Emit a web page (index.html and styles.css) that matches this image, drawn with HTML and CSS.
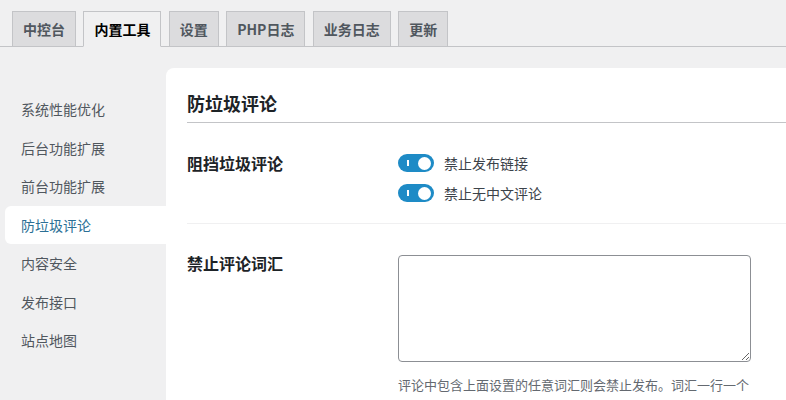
FILE: index.html
```html
<!DOCTYPE html>
<html lang="zh-CN">
<head>
<meta charset="utf-8">
<title>内置工具</title>
<link rel="stylesheet" href="styles.css">
</head>
<body>
<nav class="tabs">
  <a class="tab">中控台</a>
  <a class="tab active">内置工具</a>
  <a class="tab">设置</a>
  <a class="tab">PHP日志</a>
  <a class="tab">业务日志</a>
  <a class="tab">更新</a>
</nav>
<div class="layout">
  <ul class="side">
    <li class="side-item">系统性能优化</li>
    <li class="side-item">后台功能扩展</li>
    <li class="side-item">前台功能扩展</li>
    <li class="side-item current">防垃圾评论</li>
    <li class="side-item">内容安全</li>
    <li class="side-item">发布接口</li>
    <li class="side-item">站点地图</li>
  </ul>
  <main class="panel">
    <h2 class="panel-title">防垃圾评论</h2>
    <div class="row">
      <div class="row-label">阻挡垃圾评论</div>
      <div class="row-field">
        <label class="option"><span class="switch"></span>禁止发布链接</label>
        <label class="option"><span class="switch"></span>禁止无中文评论</label>
      </div>
    </div>
    <div class="row row-last">
      <div class="row-label">禁止评论词汇</div>
      <div class="row-field">
        <textarea class="words"></textarea>
        <p class="desc">评论中包含上面设置的任意词汇则会禁止发布。词汇一行一个</p>
      </div>
    </div>
  </main>
</div>
</body>
</html>
```

FILE: styles.css
```css
html, body {
  margin: 0;
  padding: 0;
  height: 100%;
}
body {
  background: #f0f0f1;
  font-family: "Noto Sans CJK SC", "Noto Sans", sans-serif;
  color: #1d2327;
  overflow: hidden;
}
.tabs {
  display: flex;
  gap: 7.4px;
  padding: 11px 0 0 12px;
  border-bottom: 1px solid #c3c4c7;
}
.tab {
  display: block;
  margin-bottom: -1px;
  padding: 5px 10px;
  font-size: 14px;
  line-height: 24px;
  font-weight: 700;
  color: #50575e;
  background: #dcdcde;
  border: 1px solid #c3c4c7;
}
.tab.active {
  background: #f0f0f1;
  color: #000;
  border-bottom-color: #f0f0f1;
}
.layout {
  display: flex;
  margin-top: 21px;
  height: calc(100% - 68px);
}
.side {
  list-style: none;
  margin: 0;
  padding: 22px 0 0;
  width: 166px;
  flex: none;
}
.side-item {
  height: 38.5px;
  line-height: 38.5px;
  padding-left: 21px;
  font-size: 14px;
  color: #50575e;
}
.side-item.current {
  margin-left: 5px;
  padding-left: 16px;
  background: #fff;
  color: #2b6f95;
  border-radius: 6px 0 0 6px;
}
.panel {
  flex: 1;
  background: #fff;
  border-top-left-radius: 8px;
  padding-left: 21px;
}
.panel-title {
  margin: 0;
  padding: 22px 0 6px;
  font-size: 18px;
  line-height: 26px;
  font-weight: 700;
  border-bottom: 1px solid #c3c4c7;
}
.row {
  display: flex;
  padding: 28px 0 18px;
  border-bottom: 1px solid #f0f0f1;
}
.row-last {
  padding-top: 27px;
  border-bottom: none;
}
.row-label {
  width: 211px;
  flex: none;
  font-size: 16px;
  line-height: 24px;
  font-weight: 700;
  color: #1d2327;
}
.row-field {
  display: flex;
  flex-direction: column;
  gap: 6px;
}
.option {
  display: flex;
  align-items: center;
  gap: 10px;
  height: 24px;
  font-size: 14px;
  color: #3c434a;
}
.switch {
  position: relative;
  display: block;
  width: 36px;
  height: 18px;
  border-radius: 9px;
  background: #1e8bc6;
}
.switch::before {
  content: "";
  position: absolute;
  left: 9px;
  top: 6px;
  width: 2px;
  height: 6px;
  background: #fff;
}
.switch::after {
  content: "";
  position: absolute;
  right: 3px;
  top: 2.5px;
  width: 13px;
  height: 13px;
  border-radius: 50%;
  background: #fff;
}
.words {
  display: block;
  box-sizing: border-box;
  margin-top: 4px;
  width: 353px;
  height: 107px;
  border: 1px solid #8c8f94;
  border-radius: 4px;
  background: #fff;
}
.desc {
  margin: 7px 0 0;
  font-size: 13px;
  line-height: 20px;
  color: #646970;
}
```
